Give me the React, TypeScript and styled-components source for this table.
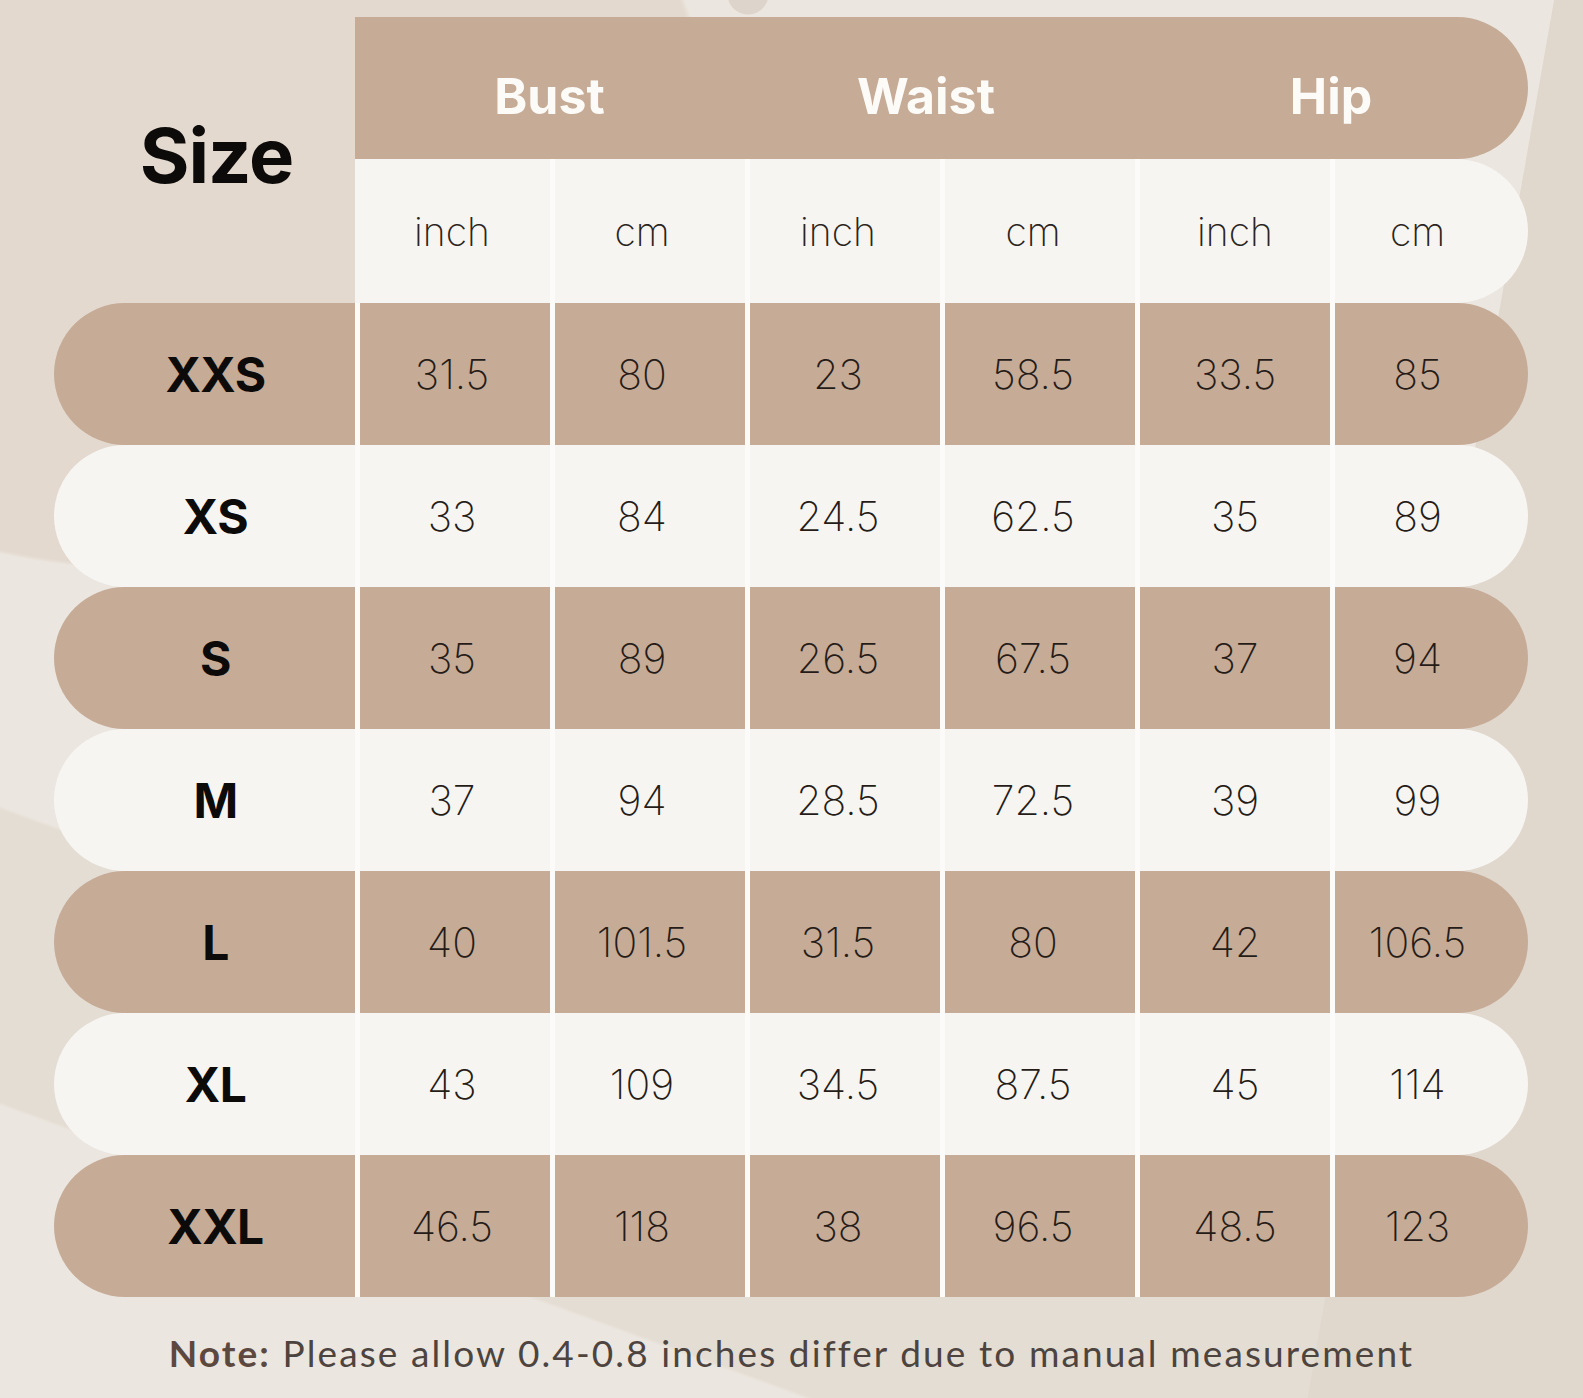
import React from "react";
import styled, { createGlobalStyle } from "styled-components";

const TAN = "#c6ab96";
const LIGHT = "#f7f5f2";

const GlobalStyle = createGlobalStyle`
  html, body { margin: 0; padding: 0; }
  body { background: #ebe6df; }
  * { box-sizing: border-box; }
`;

const Page = styled.div`
  width: 1583px;
  height: 1398px;
  overflow: hidden;
  padding: 17px 0 0 54px;
  font-family: Inter, "Noto Sans", sans-serif;
  background-color: #ebe6df;
  background-image:
    radial-gradient(circle at 748px -6px, #ddd4cb 0 20px, transparent 21px),
    radial-gradient(ellipse 560px 440px at 150px 130px, #e3d9cf 0 99%, transparent 100%),
    linear-gradient(100deg, transparent 0 1530px, #e0d7cd 1531px),
    linear-gradient(200deg, transparent 0 70%, #e4ddd4 70.2%, #e4ddd4 85%, transparent 85.2%);
`;

const Table = styled.div`
  display: flex;
  flex-direction: column;
  width: 1474px;
`;

const Top = styled.div`
  display: grid;
  grid-template-columns: 301px 1173px;
  grid-template-rows: 142px 144px;
`;

const SizeTitle = styled.div`
  grid-row: 1 / span 2;
  display: flex;
  align-items: center;
  justify-content: center;
  padding: 0 0 10px 24px;
  font-size: 76px;
  font-weight: 700;
  letter-spacing: -1px;
  color: #0d0b0a;
`;

const HeaderBand = styled.div`
  display: grid;
  grid-template-columns: 389px 390px 394px;
  background: ${TAN};
  border-radius: 0 71px 71px 0;
`;

const GroupLabel = styled.div<{ $shiftRight?: number }>`
  display: flex;
  align-items: center;
  justify-content: center;
  padding: 16px ${(p) => p.$shiftRight ?? 0}px 0 0;
  font-size: 50px;
  font-weight: 700;
  color: #fdfbf8;
`;

const UnitsRow = styled.div`
  display: grid;
  grid-template-columns: repeat(5, 195px) 198px;
  background: ${LIGHT};
  border-radius: 0 72px 72px 0;
  overflow: hidden;
`;

const UnitCell = styled.div<{ $first?: boolean; $offset: number }>`
  display: flex;
  align-items: center;
  justify-content: center;
  padding-right: ${(p) => p.$offset}px;
  border-left: 5px solid ${(p) => (p.$first ? LIGHT : "#fcfbf9")};
  font-size: 39px;
  font-weight: 250;
  color: #2a2420;
`;

const DataRow = styled.div<{ $tan: boolean }>`
  display: grid;
  grid-template-columns: 301px repeat(5, 195px) 198px;
  height: 142px;
  border-radius: 71px;
  overflow: hidden;
  background: ${(p) => (p.$tan ? TAN : LIGHT)};
`;

const SizeCell = styled.div`
  display: flex;
  align-items: center;
  justify-content: center;
  padding-left: 22px;
  font-size: 48px;
  font-weight: 700;
  letter-spacing: -0.5px;
  color: #0d0b0a;
`;

const NumCell = styled.div<{ $tan: boolean; $offset: number }>`
  display: flex;
  align-items: center;
  justify-content: center;
  padding-right: ${(p) => p.$offset}px;
  border-left: 5px solid ${(p) => (p.$tan ? "#fdfbf8" : "#fcfbf9")};
  font-size: 41px;
  font-weight: 250;
  color: #251c18;
`;

const Note = styled.p`
  margin: 34px 0 0 -54px;
  width: 1583px;
  text-align: center;
  font-family: Lato, "Open Sans", sans-serif;
  font-size: 37px;
  line-height: 44px;
  letter-spacing: 2.1px;
  color: #4e443f;
`;

const NoteLabel = styled.strong`
  font-weight: 700;
  color: #5d4840;
`;

const groups: { label: string; shift?: number }[] = [
  { label: "Bust" },
  { label: "Waist", shift: 26 },
  { label: "Hip" },
];

const units = ["inch", "cm", "inch", "cm", "inch", "cm"];
/* per-column right padding: the reference sets its figures slightly left of each column's middle */
const colOffsets = [6, 16, 14, 14, 0, 28];

const rows: [string, string[]][] = [
  ["XXS", ["31.5", "80", "23", "58.5", "33.5", "85"]],
  ["XS", ["33", "84", "24.5", "62.5", "35", "89"]],
  ["S", ["35", "89", "26.5", "67.5", "37", "94"]],
  ["M", ["37", "94", "28.5", "72.5", "39", "99"]],
  ["L", ["40", "101.5", "31.5", "80", "42", "106.5"]],
  ["XL", ["43", "109", "34.5", "87.5", "45", "114"]],
  ["XXL", ["46.5", "118", "38", "96.5", "48.5", "123"]],
];

export default function App() {
  return (
    <>
      <GlobalStyle />
      <Page>
        <Table>
          <Top>
            <SizeTitle>Size</SizeTitle>
            <HeaderBand>
              {groups.map((g) => (
                <GroupLabel key={g.label} $shiftRight={g.shift}>
                  {g.label}
                </GroupLabel>
              ))}
            </HeaderBand>
            <UnitsRow>
              {units.map((u, i) => (
                <UnitCell key={i} $first={i === 0} $offset={colOffsets[i]}>
                  {u}
                </UnitCell>
              ))}
            </UnitsRow>
          </Top>
          {rows.map(([size, values], r) => {
            const tan = r % 2 === 0;
            return (
              <DataRow key={size} $tan={tan}>
                <SizeCell>{size}</SizeCell>
                {values.map((v, i) => (
                  <NumCell key={i} $tan={tan} $offset={colOffsets[i]}>
                    {v}
                  </NumCell>
                ))}
              </DataRow>
            );
          })}
        </Table>
        <Note>
          <NoteLabel>Note:</NoteLabel> Please allow 0.4-0.8 inches differ due to manual measurement
        </Note>
      </Page>
    </>
  );
}
